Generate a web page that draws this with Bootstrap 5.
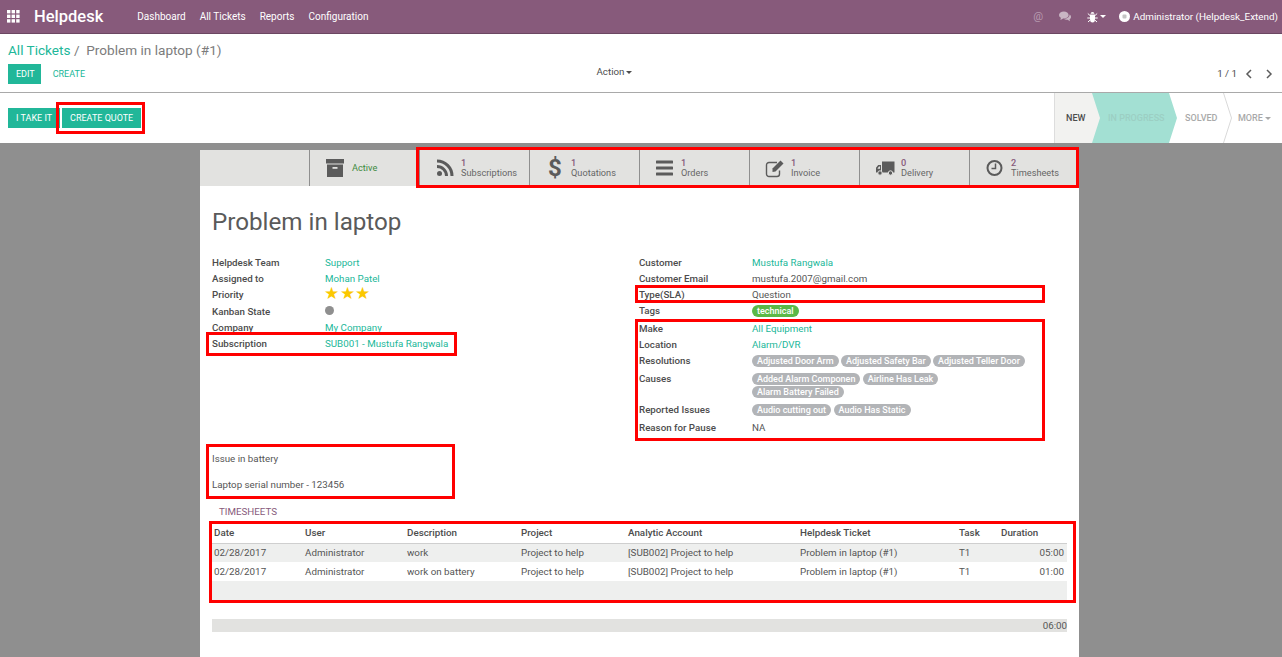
<!DOCTYPE html>
<html lang="en">
<head>
  <meta charset="UTF-8">
  <meta name="viewport" content="width=device-width, initial-scale=1.0">
  <title>Helpdesk</title>
  <link href="https://cdn.jsdelivr.net/npm/bootstrap@5.3.0/dist/css/bootstrap.min.css" rel="stylesheet">
  <style>
    html, body { height: 100%; overflow: hidden; }
    body {
      background: #8f8f8f;
      color: #4c4c4c;
      font-family: Roboto, "Liberation Sans", sans-serif;
      font-size: 9.75px;
      line-height: 16px;
    }
    a { color: #21b799; text-decoration: none; }

    /* top bar */
    .top-bar {
      height: 34px;
      padding: 0 4px 0 7px;
      background: #875a7b;
      border-bottom: 1px solid #6b4762;
    }
    .top-bar .navbar-brand { color: #fff; font-size: 16.5px; font-weight: 500; margin: 0 34px 0 14px; padding: 0; }
    .top-bar .nav-link { color: #fff; font-size: 10px; padding: 0; margin-right: 14px; }
    .top-right { color: #fff; font-size: 9.9px; }
    .at-sign { color: #b79bb0; font-size: 11px; }
    .caret-down { display: inline-block; border-top: 3px solid currentColor; border-left: 3px solid transparent; border-right: 3px solid transparent; vertical-align: middle; margin-left: 2px; }
    .caret-gap { margin-right: 13px; }
    .avatar-ico { margin-right: 3px; }

    /* control panel */
    .panel-head { height: 59px; background: #fff; border-bottom: 1px solid #a9a9a9; padding: 0 8px; }
    .crumbs { font-size: 13.6px; line-height: 20px; padding-top: 6px; color: #7c7c7c; height: 30px; }
    .panel-tools { height: 20px; }
    .odoo-btn { background: #21b799; color: #fff; font-size: 9px; border-radius: 0; border: 0; height: 20px; padding: 0 8px; line-height: 20px; text-transform: uppercase; }
    .odoo-btn:hover { background: #21b799; color: #fff; }
    .edit-btn { padding-right: 6px; }
    .plain-btn { background: transparent; color: #21b799; margin-left: 4px; }
    .plain-btn:hover { background: transparent; color: #21b799; }
    .tool-col { flex: 1 1 0; }
    .action-col { padding: 0 52px 4px 0; }
    .pager-col { gap: 12px; padding-right: 1px; }
    .pager-col span { margin-right: -4px; }

    /* status row */
    .status-row { height: 50px; background: #fff; padding-left: 8px; }
    .step-new { width: 46px; background: #f2f2f0; border-left: 1px solid #ddd; color: #4c4c4c; font-weight: 500; font-size: 9px; padding-left: 11px; }
    .step-prog { width: 85px; margin-left: -8px; background: #a3e0d3; color: #9ccfc3; font-size: 9px; font-weight: 500; padding-left: 16px; clip-path: polygon(0 0, 77px 0, 100% 50%, 77px 100%, 0 100%, 8px 50%); }
    .step-plain { color: #a9a9a9; font-size: 9px; font-weight: 500; }
    .step-solved { width: 46px; padding-left: 8px; }
    .step-more { width: 50px; padding-left: 6px; }

    /* sheet */
    .sheet { width: 879px; height: 507px; margin: 7px 0 0 200px; background: #fff; }
    .stat-bar { height: 36px; background: #e2e2e0; }
    .stat-blank { width: 109px; }
    .stat-cell { width: 110px; height: 36px; border-left: 1px solid #8f8f8f; padding-left: 15px; line-height: 10px; color: #666; font-size: 9.2px; }
    .stat-ico { width: 22px; height: 22px; margin-right: 4px; flex: none; color: #5b5b5b; }
    .stat-num { color: #875a7b; font-weight: 500; }
    .dollar-ico { font-size: 24px; font-weight: 700; line-height: 22px; text-align: center; margin-left: -1px; margin-right: 5px; }
    .active-label { color: #3e8a3e; margin-left: 1px; }
    .stat-group { width: 660px; }

    .sheet-body { padding: 0 12px; }
    .ticket-title { font-size: 24.2px; line-height: 32px; font-weight: 400; color: #5a5a5a; margin: 20px 0 17px; }
    .left-col { width: 427px; }
    .fld { min-height: 16px; }
    .fld-name { width: 113px; flex: none; font-weight: 500; color: #4c4c4c; }
    .fld-val { color: #555; }
    .stars { color: #fbc800; font-size: 16.5px; letter-spacing: .6px; line-height: 14px; margin-left: -1px; }
    .fld-stars { min-height: 17px; }
    .dot-grey { width: 9px; height: 9px; border-radius: 50%; background: #8f8f8f; margin-top: 2px; display: block; }
    .tag-pill { display: inline-block; background: #b2b4b7; color: #fff; font-weight: 500; font-size: 9px; line-height: 12px; height: 12px; padding: 0 5px; border-radius: 6px; vertical-align: top; }
    .tag-green { background: #5bb947; margin-top: 2px; }
    .tag-line { line-height: 13px; padding-top: 2px; }
    .fld-tall { min-height: 18px; }
    .fld-taller { min-height: 31px; }
    .notes { margin-top: 9px; width: 237px; height: 53px; padding-top: 6px; color: #555; }
    .notes p { margin: 0 0 10px; }
    .ts-title { color: #875a7b; margin: 6px 0 0 7px; height: 16px; }

    /* timesheet table */
    .ts-wrap { margin-top: 4px; width: 855px; }
    .ts-table { table-layout: fixed; width: 855px; margin: 0; --bs-table-bg: transparent; --bs-table-color: #555; font-size: 9.8px; }
    .ts-table th, .ts-table td { padding: 0 2px; height: 19px; line-height: 16px; vertical-align: middle; border: 0; white-space: nowrap; }
    .ts-table th { font-weight: 500; color: #4c4c4c; border-bottom: 1px solid #cfcfcf; }
    .ts-table .row-shade td { background: #eeefee; }
    .ts-table td.ts-dur { text-align: right; padding-right: 3px; }
    .w-date { width: 91px; }
    .w-user { width: 102px; }
    .w-desc { width: 114px; }
    .w-proj { width: 107px; }
    .w-acct { width: 172px; }
    .w-tick { width: 159px; }
    .w-task { width: 42px; }
    .w-dur { width: 68px; }
    .total-bar { margin-top: 19px; width: 855px; height: 13px; line-height: 13px; background: #e2e2e0; text-align: right; color: #555; }

    /* red call-outs drawn over the content */
    .hl { position: relative; }
    .hl::after { content: ""; position: absolute; border: 3px solid #f00; pointer-events: none; }
    .hl-quote { margin-left: 2px; }
    .hl-quote::after { left: -6px; right: -4px; top: -6px; bottom: -6px; }
    .hl-stats::after { left: -3px; right: 0; top: -3px; bottom: -2px; }
    .hl-sub { width: 239px; }
    .hl-sub::after { left: -6px; right: -6px; top: -4px; bottom: -4px; }
    .hl-type { width: 404px; }
    .hl-type::after { left: -4px; right: -2px; top: -2px; bottom: 0; }
    .hl-make { width: 404px; }
    .hl-make::after { left: -4px; right: -2px; top: -2px; bottom: -5px; }
    .hl-notes::after { left: -6px; right: -6px; top: -1px; bottom: -1px; }
    .hl-table::after { left: -3px; right: -9px; top: -3px; bottom: -3px; }
  </style>
</head>
<body>
  <nav class="navbar top-bar d-flex flex-nowrap align-items-center justify-content-between">
    <div class="d-flex align-items-center">
      <svg width="13" height="13" viewBox="0 0 13 13" fill="#fff"><rect width="3.4" height="3.4"/><rect x="4.6" width="3.4" height="3.4"/><rect x="9.2" width="3.4" height="3.4"/><rect y="4.6" width="3.4" height="3.4"/><rect x="4.6" y="4.6" width="3.4" height="3.4"/><rect x="9.2" y="4.6" width="3.4" height="3.4"/><rect y="9.2" width="3.4" height="3.4"/><rect x="4.6" y="9.2" width="3.4" height="3.4"/><rect x="9.2" y="9.2" width="3.4" height="3.4"/></svg>
      <a class="navbar-brand" href="#">Helpdesk</a>
      <ul class="navbar-nav flex-row">
        <li class="nav-item"><a class="nav-link" href="#">Dashboard</a></li>
        <li class="nav-item"><a class="nav-link" href="#">All Tickets</a></li>
        <li class="nav-item"><a class="nav-link" href="#">Reports</a></li>
        <li class="nav-item"><a class="nav-link" href="#">Configuration</a></li>
      </ul>
    </div>
    <div class="top-right d-flex align-items-center">
      <span class="at-sign me-3">@</span>
      <svg class="me-3" width="12" height="11" viewBox="0 0 12 11" fill="#c9b6c4"><ellipse cx="4.8" cy="4" rx="4.8" ry="3.6"/><path d="M2 6.5 1.4 9 4.4 7.4z"/><path d="M10.600 3.600c.9.6 1.400 1.400 1.400 2.300 0 1-.6 1.800-1.500 2.400l.5 2-2.400-1.500c-1.400.2-2.800-.2-3.600-1 2.800.1 5.800-1.300 5.600-4.700z"/></svg>
      <svg width="11" height="12" viewBox="0 0 11 12" fill="#fff"><path d="M3 3.500h5V8a2.500 3.500 0 0 1-5 0z"/><path d="M3.600 2.800a1.900 1.900 0 0 1 3.800 0z"/><path d="M.8 2.500 3 4.500M10.200 2.500 8 4.500M.3 7h2.700M10.700 7H8M1 11l2.200-2M10 11 7.800 9" stroke="#fff" stroke-width="1" fill="none"/></svg>
      <span class="caret-down caret-gap"></span>
      <svg class="avatar-ico" width="11" height="11" viewBox="0 0 11 11"><circle cx="5.500" cy="5.500" r="5.500" fill="#fff"/><rect x="3.500" y="3.500" width="4" height="4" rx="1" fill="#c4c4c4"/></svg>
      <span>Administrator (Helpdesk_Extend)</span>
    </div>
  </nav>

  <header class="panel-head">
    <div class="crumbs"><a href="#">All Tickets</a> /&nbsp; Problem in laptop (#1)</div>
    <div class="panel-tools d-flex align-items-center">
      <div class="tool-col d-flex">
        <button class="btn odoo-btn edit-btn" type="button">Edit</button>
        <button class="btn odoo-btn plain-btn" type="button">Create</button>
      </div>
      <div class="tool-col action-col text-center">Action<span class="caret-down"></span></div>
      <div class="tool-col pager-col d-flex justify-content-end align-items-center">
        <span>1 / 1</span>
        <svg width="8" height="10" viewBox="0 0 8 10" fill="none" stroke="#5b5b5b" stroke-width="1.500"><path d="M6 1 2 5l4 4"/></svg>
        <svg width="8" height="10" viewBox="0 0 8 10" fill="none" stroke="#5b5b5b" stroke-width="1.500"><path d="M2 1l4 4-4 4"/></svg>
      </div>
    </div>
  </header>

  <div class="status-row d-flex justify-content-between">
    <div class="d-flex align-items-center">
      <button class="btn odoo-btn" type="button">I take it</button>
      <div class="hl hl-quote"><button class="btn odoo-btn d-block" type="button">Create quote</button></div>
    </div>
    <div class="d-flex">
      <div class="step-new d-flex align-items-center">NEW</div>
      <div class="step-prog d-flex align-items-center">IN PROGRESS</div>
      <div class="step-plain step-solved d-flex align-items-center">SOLVED</div>
      <svg width="9" height="50" viewBox="0 0 9 50" fill="none" stroke="#d9d9d9"><path d="M.5 0 8.500 25 .5 50"/></svg>
      <div class="step-plain step-more d-flex align-items-center">MORE<span class="caret-down"></span></div>
    </div>
  </div>

  <main class="sheet">
    <div class="stat-bar d-flex">
      <div class="stat-blank"></div>
      <div class="stat-cell d-flex align-items-center">
        <svg class="stat-ico" viewBox="0 0 22 22" fill="#5b5b5b"><rect x="1" y="2" width="18" height="4.500"/><path d="M2 7.500h16V20H2z"/><rect x="7.500" y="10" width="5" height="1.800" fill="#e2e2e0"/></svg>
        <span class="active-label">Active</span>
      </div>
      <div class="stat-group hl hl-stats d-flex">
        <div class="stat-cell d-flex align-items-center">
          <svg class="stat-ico" viewBox="0 0 22 22" fill="none" stroke="#5b5b5b" stroke-width="3"><circle cx="4.500" cy="16.500" r="2.500" fill="#5b5b5b" stroke="none"/><path d="M2 9.500a9.500 9.500 0 0 1 9.500 9.500"/><path d="M2 4a15 15 0 0 1 15 15"/></svg>
          <div><div class="stat-num">1</div><div>Subscriptions</div></div>
        </div>
        <div class="stat-cell d-flex align-items-center">
          <div class="stat-ico dollar-ico">$</div>
          <div><div class="stat-num">1</div><div>Quotations</div></div>
        </div>
        <div class="stat-cell d-flex align-items-center">
          <svg class="stat-ico" viewBox="0 0 22 22" fill="#5b5b5b"><rect x="1" y="3.500" width="17" height="3" rx=".6"/><rect x="1" y="9.500" width="17" height="3" rx=".6"/><rect x="1" y="15.500" width="17" height="3" rx=".6"/></svg>
          <div><div class="stat-num">1</div><div>Orders</div></div>
        </div>
        <div class="stat-cell d-flex align-items-center">
          <svg class="stat-ico" viewBox="0 0 22 22"><path d="M14.500 13.500V17a2.500 2.500 0 0 1-2.500 2.500H4A2.500 2.500 0 0 1 1.500 17V8A2.500 2.500 0 0 1 4 5.500h8" fill="none" stroke="#5b5b5b" stroke-width="1.400"/><path d="M7.500 11.500 15.500 3.500l3 3-8 8-3 .5z" fill="#5b5b5b"/></svg>
          <div><div class="stat-num">1</div><div>Invoice</div></div>
        </div>
        <div class="stat-cell d-flex align-items-center">
          <svg class="stat-ico" viewBox="0 0 22 22"><path d="M7 4.500h12.500v11H7zM6 8H3.200L1 10.800v4.700h5z" fill="#5b5b5b"/><path d="M4 9.500h1v2.200H2.400z" fill="#e2e2e0"/><circle cx="5" cy="16" r="2.200" fill="#5b5b5b" stroke="#e2e2e0"/><circle cx="15.500" cy="16" r="2.200" fill="#5b5b5b" stroke="#e2e2e0"/></svg>
          <div><div class="stat-num">0</div><div>Delivery</div></div>
        </div>
        <div class="stat-cell d-flex align-items-center">
          <svg class="stat-ico" viewBox="0 0 22 22" fill="none" stroke="#5b5b5b" stroke-width="2"><circle cx="9.500" cy="11" r="7"/><path d="M10.500 6.500v5H6.500" stroke-width="1.500"/></svg>
          <div><div class="stat-num">2</div><div>Timesheets</div></div>
        </div>
      </div>
    </div>

    <div class="sheet-body">
      <h1 class="ticket-title">Problem in laptop</h1>
      <div class="d-flex">
        <div class="left-col">
          <div class="fld d-flex"><div class="fld-name">Helpdesk Team</div><a href="#">Support</a></div>
          <div class="fld d-flex"><div class="fld-name">Assigned to</div><a href="#">Mohan Patel</a></div>
          <div class="fld d-flex fld-stars"><div class="fld-name">Priority</div><div class="stars">★★★</div></div>
          <div class="fld d-flex"><div class="fld-name">Kanban State</div><div><span class="dot-grey"></span></div></div>
          <div class="fld d-flex"><div class="fld-name">Company</div><a href="#">My Company</a></div>
          <div class="fld d-flex hl hl-sub"><div class="fld-name">Subscription</div><a class="text-nowrap" href="#">SUB001 - Mustufa Rangwala</a></div>
        </div>
        <div>
          <div class="fld d-flex"><div class="fld-name">Customer</div><a href="#">Mustufa Rangwala</a></div>
          <div class="fld d-flex"><div class="fld-name">Customer Email</div><div class="fld-val">mustufa.2007@gmail.com</div></div>
          <div class="fld d-flex hl hl-type"><div class="fld-name">Type(SLA)</div><div class="fld-val">Question</div></div>
          <div class="fld d-flex fld-tall"><div class="fld-name">Tags</div><div><span class="tag-pill tag-green">technical</span></div></div>
          <div class="hl hl-make">
            <div class="fld d-flex"><div class="fld-name">Make</div><a href="#">All Equipment</a></div>
            <div class="fld d-flex"><div class="fld-name">Location</div><a href="#">Alarm/DVR</a></div>
            <div class="fld d-flex fld-tall"><div class="fld-name">Resolutions</div><div class="tag-line"><span class="tag-pill">Adjusted Door Arm</span> <span class="tag-pill">Adjusted Safety Bar</span> <span class="tag-pill">Adjusted Teller Door</span></div></div>
            <div class="fld d-flex fld-taller"><div class="fld-name">Causes</div><div class="tag-line"><span class="tag-pill">Added Alarm Componen</span> <span class="tag-pill">Airline Has Leak</span><br><span class="tag-pill">Alarm Battery Failed</span></div></div>
            <div class="fld d-flex fld-tall"><div class="fld-name">Reported Issues</div><div class="tag-line"><span class="tag-pill">Audio cutting out</span> <span class="tag-pill">Audio Has Static</span></div></div>
            <div class="fld d-flex"><div class="fld-name">Reason for Pause</div><div class="fld-val">NA</div></div>
          </div>
        </div>
      </div>

      <div class="notes hl hl-notes">
        <p>Issue in battery</p>
        <p>Laptop serial number - 123456</p>
      </div>

      <div class="ts-title">TIMESHEETS</div>
      <div class="ts-wrap hl hl-table">
        <table class="table ts-table">
          <thead>
            <tr>
              <th class="w-date">Date</th><th class="w-user">User</th><th class="w-desc">Description</th><th class="w-proj">Project</th><th class="w-acct">Analytic Account</th><th class="w-tick">Helpdesk Ticket</th><th class="w-task">Task</th><th class="w-dur">Duration</th>
            </tr>
          </thead>
          <tbody>
            <tr class="row-shade"><td>02/28/2017</td><td>Administrator</td><td>work</td><td>Project to help</td><td>[SUB002] Project to help</td><td>Problem in laptop (#1)</td><td>T1</td><td class="ts-dur">05:00</td></tr>
            <tr><td>02/28/2017</td><td>Administrator</td><td>work on battery</td><td>Project to help</td><td>[SUB002] Project to help</td><td>Problem in laptop (#1)</td><td>T1</td><td class="ts-dur">01:00</td></tr>
            <tr class="row-shade"><td colspan="8"></td></tr>
          </tbody>
        </table>
      </div>
      <div class="total-bar">06:00</div>
    </div>
  </main>
</body>
</html>
